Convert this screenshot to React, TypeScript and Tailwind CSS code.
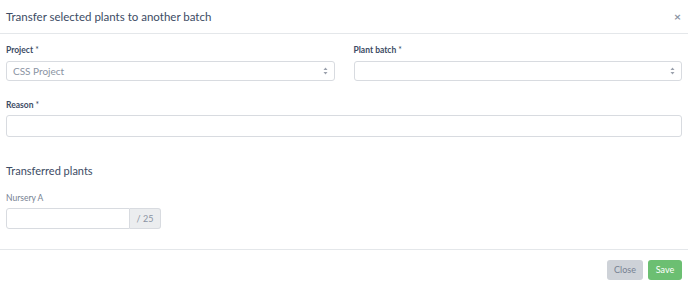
export default function App() {
  return (
    <div
      className="w-[688px] h-[287px] bg-white text-[#3c4b64] flex flex-col"
      style={{ fontFamily: "Lato, 'Noto Sans', sans-serif" }}
    >
      <div className="h-[34px] shrink-0 flex items-center justify-between px-[6px] border-b border-[#e4e7ea]">
        <h5 className="text-[11.5px] text-[#3c4b64]">Transfer selected plants to another batch</h5>
        <span className="text-[12px] font-bold text-[#8a93a2] pr-[1px] leading-none">×</span>
      </div>
      <div className="flex-1 px-[6px] pt-[10px]">
        <div className="grid grid-cols-2 gap-[19px]">
          <div>
            <label className="block text-[8.5px] font-bold h-[17px] leading-[12px]">
              Project <span className="font-normal">*</span>
            </label>
            <div className="h-[20px] border border-[#d8dbe0] rounded-[3px] flex items-center justify-between px-[6px]">
              <span className="text-[10px] text-[#8a93a2]">CSS Project</span>
              <Caret />
            </div>
          </div>
          <div>
            <label className="block text-[8.5px] font-bold h-[17px] leading-[12px]">
              Plant batch <span className="font-normal">*</span>
            </label>
            <div className="h-[20px] border border-[#d8dbe0] rounded-[3px] flex items-center justify-end px-[6px]">
              <Caret />
            </div>
          </div>
        </div>
        <div className="mt-[18px]">
          <label className="block text-[8.5px] font-bold h-[16px] leading-[12px]">
            Reason <span className="font-normal">*</span>
          </label>
          <div className="h-[22px] border border-[#d8dbe0] rounded-[3px]" />
        </div>
        <h6 className="text-[11px] mt-[26px] h-[16px] leading-[16px]">Transferred plants</h6>
        <div className="text-[8.5px] text-[#768192] mt-[13px] h-[16px] leading-[12px]">Nursery A</div>
        <div className="flex w-[155px] h-[21px]">
          <div className="flex-1 border border-[#d8dbe0] rounded-l-[3px]" />
          <div className="w-[31px] bg-[#ebedef] border border-l-0 border-[#d8dbe0] rounded-r-[3px] flex items-center justify-center text-[9px] text-[#8a93a2]">
            / 25
          </div>
        </div>
      </div>
      <div className="h-[38px] shrink-0 border-t border-[#e4e7ea] flex items-center justify-end gap-[5px] px-[6px] pt-[3px]">
        <button className="h-[20px] w-[36px] rounded-[3px] bg-[#ced2d8] text-[9px] text-[#768192]">Close</button>
        <button className="h-[20px] w-[34px] rounded-[3px] bg-[#6cbf72] text-[9px] text-white">Save</button>
      </div>
    </div>
  );
}

function Caret() {
  return (
    <svg width="5" height="8" viewBox="0 0 5 8" className="text-[#9aa0ac]">
      <path d="M2.5 0.5 L4.5 3 H0.5 Z" fill="currentColor" />
      <path d="M2.5 7.5 L4.5 5 H0.5 Z" fill="currentColor" />
    </svg>
  );
}
